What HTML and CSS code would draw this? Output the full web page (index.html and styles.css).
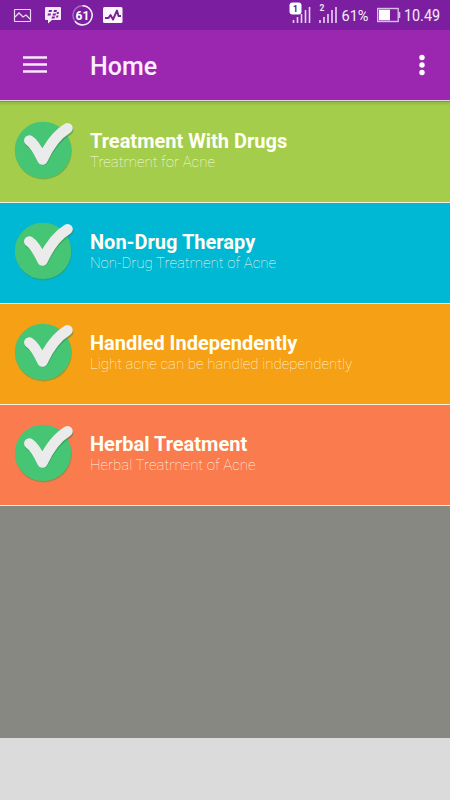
FILE: index.html
```html
<!DOCTYPE html>
<html lang="en">
<head>
<meta charset="utf-8">
<title>Home</title>
<link rel="stylesheet" href="styles.css">
</head>
<body>
<svg width="0" height="0" class="defs">
  <defs>
    <symbol id="check" viewBox="0 0 64 64">
      <circle cx="29.500" cy="32.200" r="28.300" fill="#38944f" opacity=".45"/>
      <circle cx="29" cy="30.900" r="28.200" fill="#46c675"/>
      <path d="M15.300 22Q21 25 28.500 39.500Q39 18 53.500 9.800" transform="translate(.6 1.400)" fill="none" stroke="#2e8a50" stroke-opacity=".5" stroke-width="10.500" stroke-linecap="round" stroke-linejoin="round"/>
      <path d="M15.300 21.500Q21 25 28.500 40.500Q39 18 53.500 9.300" fill="none" stroke="#ebebeb" stroke-width="10.500" stroke-linecap="round" stroke-linejoin="round"/>
    </symbol>
    <symbol id="bars" viewBox="0 0 20 20">
      <path d="M2.500 15v3M6.500 12v6M10.500 9v9M14.500 5v13M18.500 2v16" stroke="#e9d5f0" stroke-width="1.600"/>
    </symbol>
  </defs>
</svg>
<div class="status">
  <svg class="notices" width="126" height="30" viewBox="0 0 126 30">
    <g fill="none" stroke="#ead8f1">
      <rect x="14.500" y="9.500" width="16" height="12" rx=".5" stroke-width="1.200"/>
      <path d="M15 17l4-4 4 4 3-2 4 4" stroke-width="1.300"/>
    </g>
    <path d="M46 7h14q1 0 1 1v11q0 1-1 1h-8l-4 3.500V20h-2q-1 0-1-1V8q0-1 1-1z" fill="#f4ebf7"/>
    <path d="M49 10h3l-.5 2h-3zM54 10h3l-.5 2h-3zM48 13.500h3l-.5 2h-3zM53 13.500h3l-.5 2h-3zM57 12h2l-.5 2h-2zM52 16.500h3l-.5 2h-3zM56.500 15.500h2l-.5 2h-2z" fill="#7b1fa0"/>
    <circle cx="82.500" cy="15.300" r="9.600" fill="none" stroke="#a86bc0" stroke-width="1.500"/>
    <path d="M82.500 5.700A9.600 9.600 0 1 1 75 21.300" fill="none" stroke="#f3e8f7" stroke-width="1.500"/>
    <text x="82.500" y="19.700" text-anchor="middle" font-size="12" font-weight="700" fill="#fff">61</text>
    <rect x="103" y="7" width="19.500" height="16" rx="1.500" fill="#fbf7fc"/>
    <path d="M105 18h3.500l2-3 2.500 4.500 4-9 1.500 5.500H121" fill="none" stroke="#762093" stroke-width="1.900" stroke-linejoin="round"/>
  </svg>
  <svg class="system" width="170" height="30" viewBox="280 0 170 30">
    <use href="#bars" x="291" y="5" width="20" height="20"/>
    <rect x="289.500" y="2.500" width="12" height="12" rx="3" fill="#fff"/>
    <text x="295.500" y="11.500" text-anchor="middle" font-size="8.500" font-weight="700" fill="#4d1865">1</text>
    <use href="#bars" x="317.500" y="5" width="20" height="20"/>
    <text x="322" y="11.200" text-anchor="middle" font-size="8.500" font-weight="700" fill="#f0e3f5">2</text>
    <text x="341.500" y="20.700" font-size="15.500" textLength="27" lengthAdjust="spacingAndGlyphs" fill="#f5edf8">61%</text>
    <rect x="377.700" y="8.500" width="20.500" height="13" fill="none" stroke="#d9bce4" stroke-width="1.400"/>
    <path d="M399.500 12v6" stroke="#d9bce4" stroke-width="1.500"/>
    <rect x="379" y="9.700" width="11" height="10.600" fill="#fff"/>
    <text x="404" y="20.700" font-size="16" textLength="36" lengthAdjust="spacingAndGlyphs" fill="#f5edf8">10.49</text>
  </svg>
</div>
<header class="appbar">
  <svg width="24" height="20" viewBox="0 0 24 20"><path d="M0 2.500h24M0 9.500h24M0 16.500h24" stroke="#fae8fc" stroke-width="2.500"/></svg>
  <h1>Home</h1>
  <svg class="more" width="8" height="22" viewBox="0 0 8 22" fill="#fff"><circle cx="4" cy="3.500" r="2.700"/><circle cx="4" cy="11" r="2.700"/><circle cx="4" cy="18.500" r="2.700"/></svg>
</header>
<main class="list">
  <section class="row green"><svg class="icon"><use href="#check"/></svg><div><h2>Treatment With Drugs</h2><p>Treatment for Acne</p></div></section>
  <section class="row cyan"><svg class="icon"><use href="#check"/></svg><div><h2>Non-Drug Therapy</h2><p>Non-Drug Treatment of Acne</p></div></section>
  <section class="row amber"><svg class="icon"><use href="#check"/></svg><div><h2>Handled Independently</h2><p>Light acne can be handled independently</p></div></section>
  <section class="row coral"><svg class="icon"><use href="#check"/></svg><div><h2>Herbal Treatment</h2><p>Herbal Treatment of Acne</p></div></section>
</main>
<footer class="banner"></footer>
</body>
</html>
```
FILE: styles.css
```css
* { box-sizing: border-box; margin: 0; padding: 0; }
body { height: 800px; display: flex; flex-direction: column; overflow: hidden; font-family: Roboto, sans-serif; background: #878882; }
.defs { position: absolute; }
svg { display: block; flex: none; }
.status { height: 30px; flex: none; display: flex; justify-content: space-between; background: #7b1fa0; }
.appbar { height: 71px; flex: none; display: flex; align-items: center; padding: 0 24px 1px 23px; background: #9b27b0; border-bottom: 1px solid #e2d5d5; }
.appbar h1 { margin-left: 43px; padding-top: 4px; font-size: 25px; font-weight: 500; line-height: 30px; color: #fdeeff; }
.more { margin-left: auto; }
.list { flex: 1; padding-top: .5px; background: #878882; }
.row { height: 101.150px; display: flex; padding-top: 17px; padding-left: 14px; border-bottom: 1px solid #f5f0dc; }
.icon { width: 64px; height: 64px; margin-right: 12px; }
.row h2 { margin-top: 10px; font-size: 20px; line-height: 24px; font-weight: 700; color: #fffff5; white-space: nowrap; }
.row p { font-size: 15px; line-height: 18px; font-weight: 100; color: rgba(255, 255, 235, .95); white-space: nowrap; }
.green { background: linear-gradient(#92b943, #a4cd4b 4px); }
.cyan { background: #00b7d4; }
.amber { background: #f6a015; }
.coral { background: #fa7b4d; }
.banner { height: 62px; flex: none; background: #dbdbdb; }
```
